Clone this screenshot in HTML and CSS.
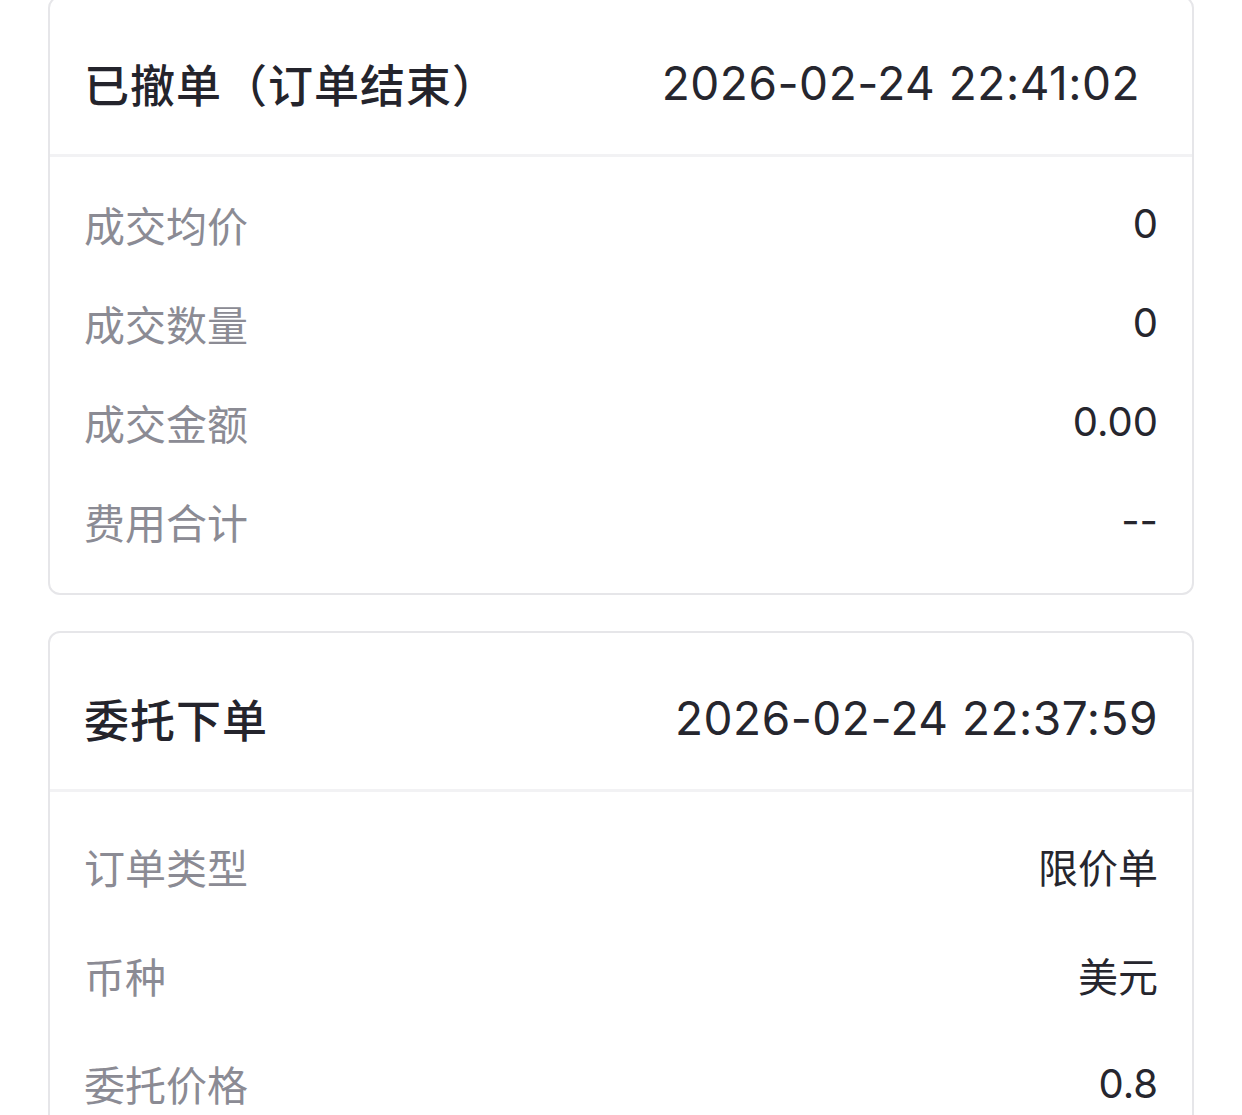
FILE: index.html
```html
<!DOCTYPE html>
<html lang="zh-CN">
<head>
<meta charset="utf-8">
<link rel="stylesheet" href="styles.css">
</head>
<body>
<div class="page">
  <section class="card card-first">
    <header class="card-head">
      <span class="title">已撤单（订单结束）</span>
      <span class="time time-shift">2026-02-24 22:41:02</span>
    </header>
    <div class="card-body">
      <div class="row"><span class="label">成交均价</span><span class="value">0</span></div>
      <div class="row"><span class="label">成交数量</span><span class="value">0</span></div>
      <div class="row"><span class="label">成交金额</span><span class="value">0.00</span></div>
      <div class="row"><span class="label">费用合计</span><span class="value">--</span></div>
    </div>
  </section>
  <section class="card card-second">
    <header class="card-head">
      <span class="title">委托下单</span>
      <span class="time">2026-02-24 22:37:59</span>
    </header>
    <div class="card-body body-tall">
      <div class="row"><span class="label">订单类型</span><span class="value">限价单</span></div>
      <div class="row"><span class="label">币种</span><span class="value">美元</span></div>
      <div class="row"><span class="label">委托价格</span><span class="value">0.8</span></div>
      <div class="row"><span class="label">委托数量</span><span class="value">1</span></div>
    </div>
  </section>
</div>
</body>
</html>
```
FILE: styles.css
```css
html, body {
  margin: 0;
  padding: 0;
  background: #ffffff;
  overflow: hidden;
}
body {
  font-family: "Inter", "Noto Sans CJK SC", sans-serif;
  color: #25252d;
}
.page {
  display: flex;
  flex-direction: column;
  gap: 36px;
  padding: 0 48px 0 48px;
  margin-top: -4px;
}
.card {
  border: 2px solid #e6e6e9;
  border-radius: 12px;
  background: #fff;
}
.card-head {
  height: 159px;
  box-sizing: border-box;
  padding: 14px 34px 0 34px;
  display: flex;
  align-items: center;
  justify-content: space-between;
  border-bottom: 3px solid #f2f2f4;
}
.title {
  font-size: 45px;
  font-weight: 500;
  color: #24242c;
  letter-spacing: 1px;
}
.time {
  font-size: 46px;
  font-weight: 400;
  color: #26262e;
  letter-spacing: 0.5px;
}
.time-shift {
  margin-right: 18px;
}
.card-body {
  padding: 17px 34px 23px 34px;
}
.body-tall {
  padding-top: 20px;
}
.row {
  height: 99px;
  display: flex;
  align-items: center;
  justify-content: space-between;
}
.body-tall .row {
  height: 108.5px;
}
.label {
  font-size: 41px;
  color: #8b8b94;
}
.value {
  font-size: 40px;
  color: #26262e;
}
```
